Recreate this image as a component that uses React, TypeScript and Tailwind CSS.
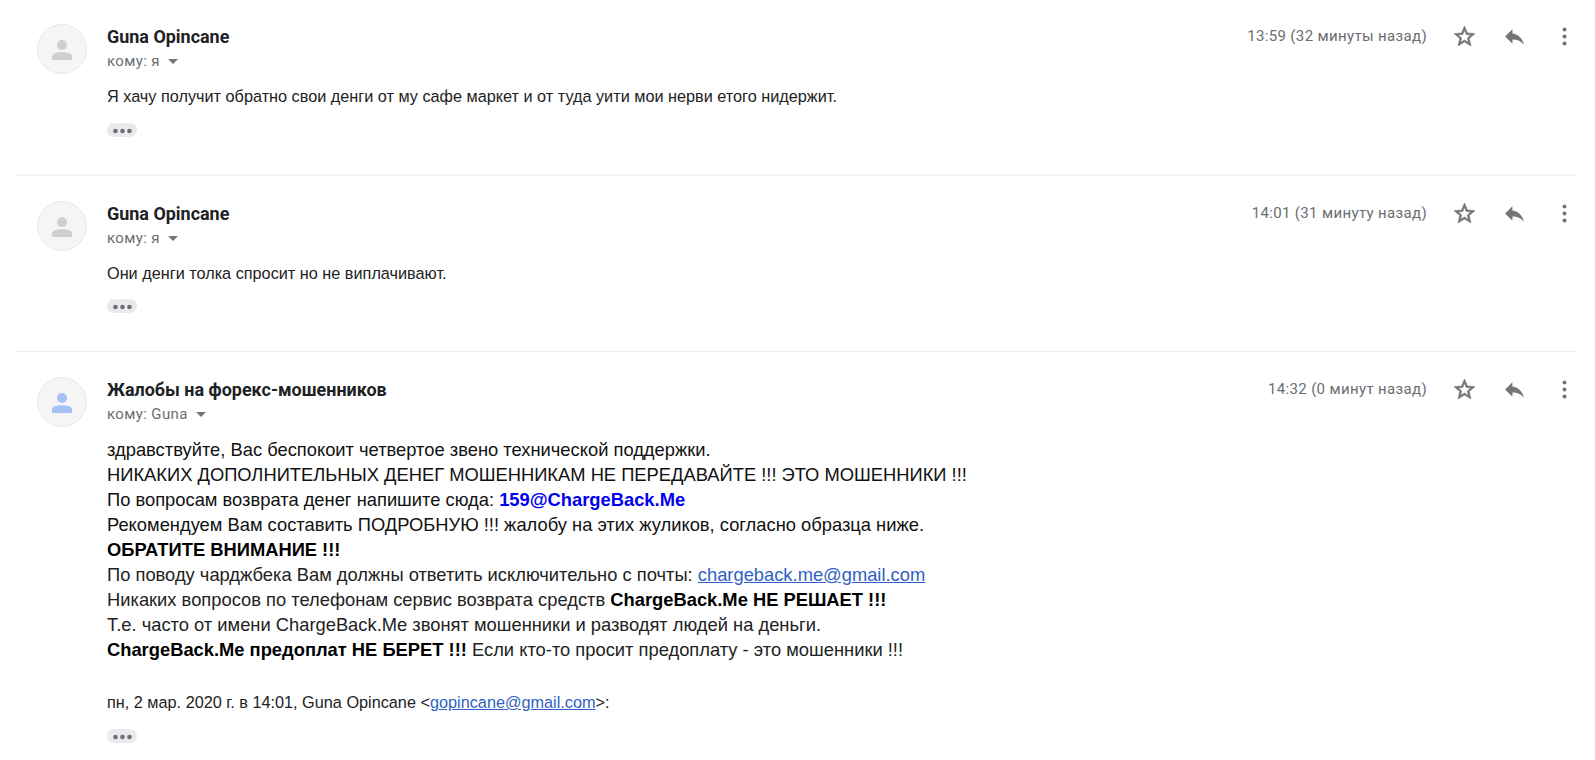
import React from "react";

type MessageProps = {
  name: string;
  to: string;
  time: string;
  avatarColor?: string;
  className?: string;
  children: React.ReactNode;
};

function Avatar({ color }: { color: string }) {
  return (
    <div className="flex h-[50px] w-[50px] shrink-0 items-center justify-center rounded-full border border-[#e8e8e8] bg-[#f5f5f5]">
      <svg width="30" height="30" viewBox="0 0 24 24" className={`mt-0.5 ${color}`} fill="currentColor">
        <circle cx="12" cy="8" r="4" />
        <path d="M4 20v-2.800C4 14.800 7.500 13.800 12 13.800s8 1 8 3.400V20z" />
      </svg>
    </div>
  );
}

function Actions() {
  return (
    <div className="flex items-center text-[#757575]">
      <svg width="25" height="25" viewBox="0 0 24 24" fill="currentColor" stroke="currentColor" strokeWidth="0.6">
        <path d="M22 9.240l-7.190-.620L12 2 9.190 8.630 2 9.240l5.460 4.730L5.820 21 12 17.270 18.180 21l-1.630-7.030L22 9.240zM12 15.400l-3.760 2.270 1-4.280-3.320-2.880 4.380-.380L12 6.100l1.710 4.040 4.380.380-3.320 2.880 1 4.280L12 15.400z" />
      </svg>
      <svg width="25" height="25" viewBox="0 0 24 24" className="ml-[25px]" fill="currentColor">
        <path d="M10 9V5l-7 7 7 7v-4.100c5 0 8.500 1.600 11 5.100-1-5-4-10-11-11z" />
      </svg>
      <svg width="25" height="25" viewBox="0 0 24 24" className="ml-[25px]" fill="currentColor">
        <circle cx="12" cy="5.300" r="1.900" />
        <circle cx="12" cy="12" r="1.900" />
        <circle cx="12" cy="18.700" r="1.900" />
      </svg>
    </div>
  );
}

function TrimmedContent() {
  return (
    <div className="flex h-3.5 w-[30px] items-center justify-center rounded-full bg-[#e8eaed]">
      <svg width="20" height="6" viewBox="0 0 20 6" className="mt-px text-[#6b6e72]" fill="currentColor">
        <circle cx="3.500" cy="3" r="2.300" />
        <circle cx="10.500" cy="3" r="2.300" />
        <circle cx="17.500" cy="3" r="2.300" />
      </svg>
    </div>
  );
}

function Message({ name, to, time, avatarColor = "text-[#cfcfcf]", className = "", children }: MessageProps) {
  return (
    <article className={`flex pl-5 ${className}`}>
      <Avatar color={avatarColor} />
      <div className="ml-5 flex-1">
        <div className="flex h-[50px] justify-between">
          <div className="font-[Roboto,sans-serif]">
            <h3 className="pt-px text-[17.950px] leading-[24px] font-bold text-[#202124]">{name}</h3>
            <div className="flex items-center text-[15px] leading-[24px] tracking-[0.375px] text-[#6b6e72]">
              {to}
              <span className="ml-2 border-x-[5px] border-t-[5px] border-x-transparent border-t-[#757575]" />
            </div>
          </div>
          <div className="-mr-px flex h-[25px] items-center">
            <span className="mr-[25px] font-[Roboto,sans-serif] text-[15px] tracking-[0.350px] text-[#6b6e72]">
              {time}
            </span>
            <Actions />
          </div>
        </div>
        {children}
      </div>
    </article>
  );
}

export default function App() {
  return (
    <main className="h-[760px] bg-white pr-[19px] pl-[17px] font-['Liberation_Sans',Arial,sans-serif] text-[#222222]">
      <Message
        name="Guna Opincane"
        to="кому: я"
        time="13:59 (32 минуты назад)"
        className="h-[176px] border-b-2 border-[#f2f2f2] pt-6"
      >
        <p className="mt-[10px] mb-[15px] text-[16.250px] leading-6">
          Я хачу получит обратно свои денги от му сафе маркет и от туда уити мои нерви етого нидержит.
        </p>
        <TrimmedContent />
      </Message>

      <Message
        name="Guna Opincane"
        to="кому: я"
        time="14:01 (31 минуту назад)"
        className="h-[176px] border-b border-[#ececec] pt-[25px]"
      >
        <p className="mt-[10px] mb-3.5 text-[16.250px] leading-6">
          Они денги толка спросит но не виплачивают.
        </p>
        <TrimmedContent />
      </Message>

      <Message
        name="Жалобы на форекс-мошенников"
        to="кому: Guna"
        time="14:32 (0 минут назад)"
        avatarColor="text-[#a4c2f4]"
        className="pt-[25px]"
      >
        <div className="mt-[10px] text-[18.330px] leading-[25px]">
          <p className="text-[#111111]">здравствуйте, Вас беспокоит четвертое звено технической поддержки.</p>
          <p className="text-[#111111]">
            НИКАКИХ ДОПОЛНИТЕЛЬНЫХ ДЕНЕГ МОШЕННИКАМ НЕ ПЕРЕДАВАЙТЕ !!! ЭТО МОШЕННИКИ !!!
          </p>
          <p className="text-[#111111]">
            По вопросам возврата денег напишите сюда: <b className="text-[#0000ee]">159@ChargeBack.Me</b>
          </p>
          <p className="text-[#111111]">
            Рекомендуем Вам составить ПОДРОБНУЮ !!! жалобу на этих жуликов, согласно образца ниже.
          </p>
          <p className="font-bold text-black">ОБРАТИТЕ ВНИМАНИЕ !!!</p>
          <p>
            По поводу чарджбека Вам должны ответить исключительно с почты:{" "}
            <a href="#" className="text-[#2f5fc4] underline">chargeback.me@gmail.com</a>
          </p>
          <p>
            Никаких вопросов по телефонам сервис возврата средств{" "}
            <b className="text-black">ChargeBack.Me НЕ РЕШАЕТ !!!</b>
          </p>
          <p>Т.е. часто от имени ChargeBack.Me звонят мошенники и разводят людей на деньги.</p>
          <p>
            <b className="text-black">ChargeBack.Me предоплат НЕ БЕРЕТ !!!</b> Если кто-то просит предоплату - это
            мошенники !!!
          </p>
        </div>
        <p className="mt-7 mb-[15px] text-[16.250px] leading-6">
          пн, 2 мар. 2020 г. в 14:01, Guna Opincane &lt;
          <a href="#" className="text-[#2f5fc4] underline">gopincane@gmail.com</a>&gt;:
        </p>
        <TrimmedContent />
      </Message>
    </main>
  );
}
